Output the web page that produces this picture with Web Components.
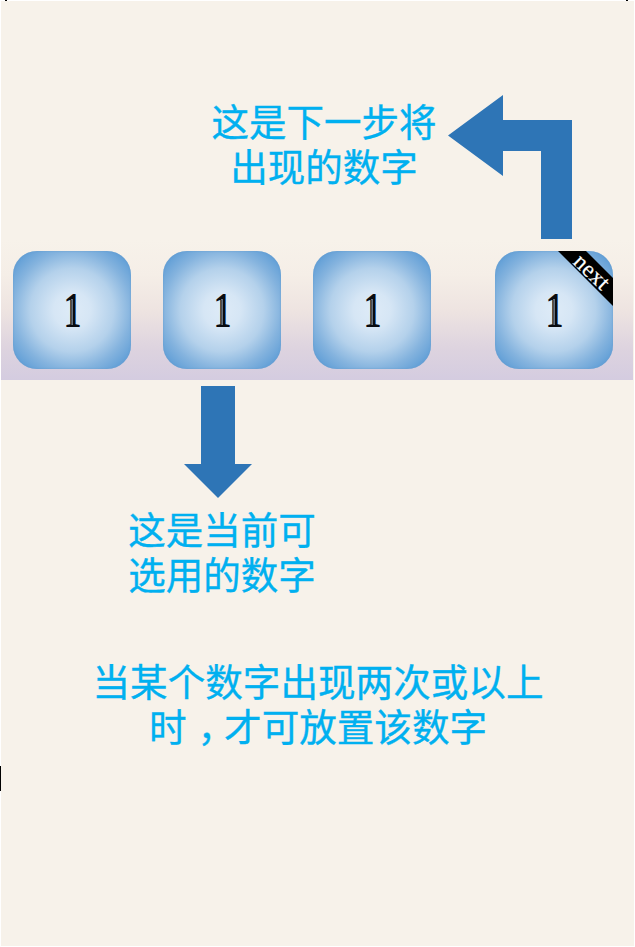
<!DOCTYPE html>
<html lang="zh-CN"><head><meta charset="utf-8"><title>数字</title>
<style>body{margin:0;background:#fff}</style></head>
<body><number-guide></number-guide>
<script>
class BaseElement extends HTMLElement{
  connectedCallback(){
    if(this.shadowRoot)return;
    this.attachShadow({mode:'open'}).innerHTML=this.view();
  }
}
customElements.define('guide-note',class extends BaseElement{
  view(){return `<style>:host{display:block;font:37.5px/45px "Noto Sans CJK SC",sans-serif;color:#00b0f0;-webkit-text-stroke:.35px #00b0f0;white-space:nowrap;text-align:center}</style><slot></slot>`}
});
customElements.define('guide-arrow',class extends BaseElement{
  view(){
    const turn=this.getAttribute('kind')==='turn';
    const [w,h,p]=turn?[124,144,'0,40.5 55,0 55,25 124,25 124,144 93,144 93,56 55,56 55,81']:[68,112,'17,0 51,0 51,78 68,78 34,112 0,78 17,78'];
    return `<style>:host{display:block;width:${w}px;height:${h}px}svg{display:block}</style><svg width="${w}" height="${h}"><polygon points="${p}" fill="#2e75b6"/></svg>`}
});
customElements.define('number-tile',class extends BaseElement{
  view(){return `<style>
:host{display:grid;place-items:center;position:relative;box-sizing:border-box;width:118px;height:118px;border-radius:24px;overflow:hidden;background:radial-gradient(circle at 50% 50%,#deebf7 0,#d6e6f5 22%,#b4d1eb 50%,#84b3de 71%,#5b9bd5 92%);box-shadow:inset 0 0 2px #649bce}
.digit{position:relative;width:25px;height:50px}
.digit span{display:block;font:bold 50px/50px "Liberation Serif",serif;color:#080b10;text-align:center;transform:scaleX(.72)}
.digit svg{position:absolute;left:0;top:0}
.ribbon{position:absolute;right:0;top:0}
</style><div class="digit"><span><slot></slot></span><svg width="25" height="50" fill="none"><path d="M12 14V40" stroke="#c9d6e2"/><path d="M11 15V40" stroke="#27303a"/></svg></div>${this.hasAttribute('next')?'<svg class="ribbon" width="56" height="56"><polygon points="1,0 29,0 56,27 56,55" fill="#000"/><text transform="translate(33,23) rotate(44)" text-anchor="middle" y="4.5" font-family="Liberation Serif,serif" font-size="23" letter-spacing=".4" fill="#fff" stroke="#fff" stroke-width=".2">next</text></svg>':''}`}
});
customElements.define('number-guide',class extends BaseElement{
  view(){return `<style>
:host{display:flow-root;box-sizing:border-box;width:635px;height:947px;background:#fff;padding:1px;position:relative}
main{display:flex;flex-direction:column;width:633px;height:945px;background:#f7f2ea}
.top{display:flex;height:239px;box-sizing:border-box;padding:94px 0 0 210px;gap:11px}
.top guide-note{width:226px;padding-top:2px}
.band{display:flex;gap:32px;box-sizing:border-box;width:632px;height:140px;padding:11px 0 0 12px;background:linear-gradient(#f7f2ea 0,#f5eee7 25%,#eee4e1 50%,#ddd3df 78%,#d4cce0 100%)}
number-tile[next]{margin-left:32px}
.current{margin:6px 0 0 183px}
.available{width:188px;margin:7px 0 0 127px}
.rule{width:452px;margin:62px 0 0 91px;font-size:37.6px}
.comma{display:inline-block;box-sizing:border-box;width:37.6px;padding-left:11px;line-height:30px;text-align:left}
.mark{position:absolute;background:#000;width:2px;height:1px;top:0}
.a{left:5px}.b{left:626px}.c{left:0;top:766px;width:1px;height:25px}
</style><main>
<section class="top"><guide-note>这是下一步将<br>出现的数字</guide-note><guide-arrow kind="turn"></guide-arrow></section>
<section class="band"><number-tile>1</number-tile><number-tile>1</number-tile><number-tile>1</number-tile><number-tile next>1</number-tile></section>
<guide-arrow class="current"></guide-arrow>
<guide-note class="available">这是当前可<br>选用的数字</guide-note>
<guide-note class="rule">当某个数字出现两次或以上<br>时<span class="comma">，</span>才可放置该数字</guide-note>
</main><i class="mark a"></i><i class="mark b"></i><i class="mark c"></i>`}
});
</script></body></html>
